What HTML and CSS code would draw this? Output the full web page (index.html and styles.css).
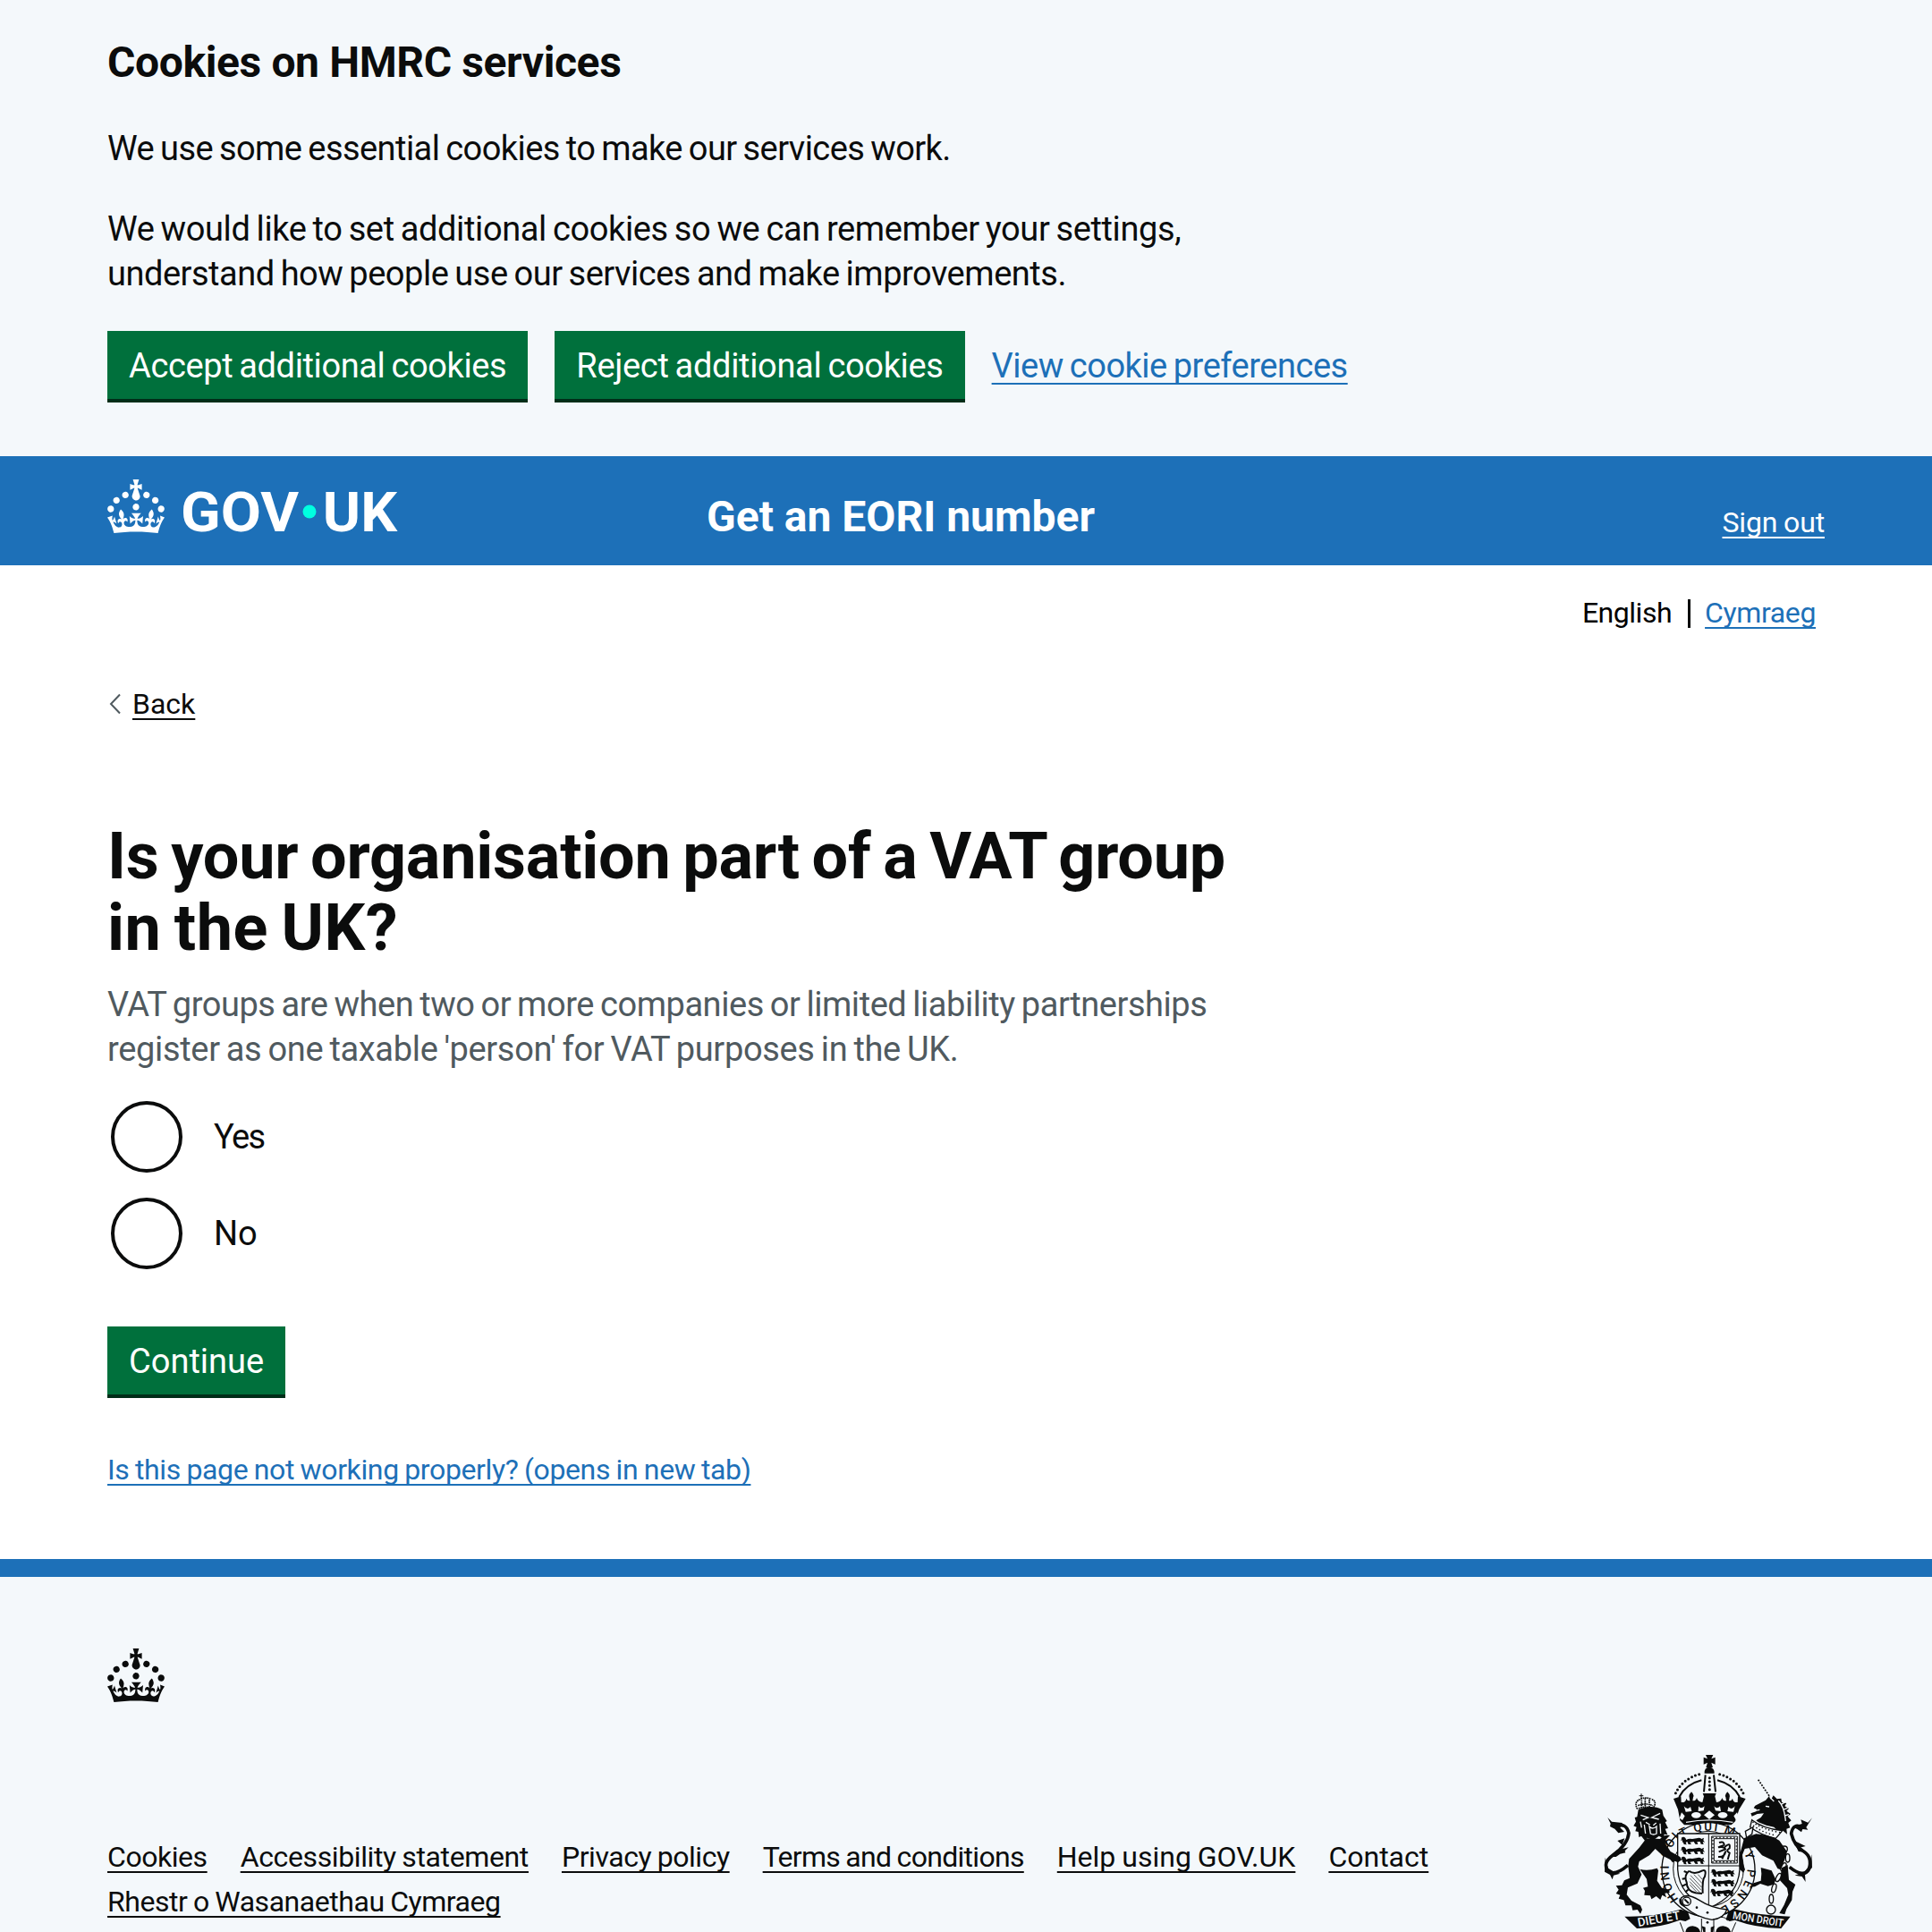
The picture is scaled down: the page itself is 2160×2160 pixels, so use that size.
FILE: index.html
```html
<!DOCTYPE html>
<html lang="en">
<head>
<meta charset="utf-8">
<title>Get an EORI number</title>
<link rel="stylesheet" href="styles.css">
</head>
<body>
<section class="cookie-banner">
  <div class="container">
    <h2 class="heading-m track-4">Cookies on HMRC services</h2>
    <p class="body track-6">We use some essential cookies to make our services work.</p>
    <p class="body"><span class="track-4">We would like to set additional cookies so we can remember your settings,</span><br><span class="track-5">understand how people use our services and make improvements.</span></p>
    <div class="button-group">
      <button class="button track-4">Accept additional cookies</button>
      <button class="button track-3">Reject additional cookies</button>
      <a class="link link-large track-5" href="#">View cookie preferences</a>
    </div>
  </div>
</section>

<header class="header">
  <div class="container header-row">
    <a class="header-logo" href="#" aria-label="GOV.UK">
      <svg class="logo" viewBox="0 0 164 30">
        <path id="crown" d="M22.6 10.4c-1 .4-2-.1-2.4-1-.4-.9.1-2 1-2.4.9-.4 2 .1 2.4 1s-.1 2-1 2.4m-5.9 6.7c-.9.4-2-.1-2.4-1-.4-.9.1-2 1-2.4.9-.4 2 .1 2.4 1s-.1 2-1 2.4m10.8-3.7c-1 .4-2-.1-2.4-1-.4-.9.1-2 1-2.4.9-.4 2 .1 2.4 1s0 2-1 2.4m3.3 4.8c-1 .4-2-.1-2.4-1-.4-.9.1-2 1-2.4.9-.4 2 .1 2.4 1s-.1 2-1 2.4M17 4.7l2.3 1.2V2.5l-2.3.7-.2-.2.9-3h-3.4l.9 3-.2.2c-.1.1-2.3-.7-2.3-.7v3.4L15 4.7c.1.1.1.2.2.2l-1.3 4c-.1.2-.1.4-.1.6 0 1.1.8 2 1.9 2.2h.7c1-.2 1.9-1.1 1.9-2.1 0-.2 0-.4-.1-.6l-1.3-4c-.1-.2 0-.2.1-.3m-7.6 5.7c.9.4 2-.1 2.4-1 .4-.9-.1-2-1-2.4-.9-.4-2 .1-2.4 1s0 2 1 2.4m-5 3c.9.4 2-.1 2.4-1 .4-.9-.1-2-1-2.4-.9-.4-2 .1-2.4 1s.1 2 1 2.4m-3.2 4.8c.9.4 2-.1 2.4-1 .4-.9-.1-2-1-2.4-.9-.4-2 .1-2.4 1s0 2 1 2.4m14.8 11c4.4 0 8.6.3 12.3.8 1.1-4.5 2.4-7 3.7-8.8l-2.5-.9c.2 1.3.3 1.9 0 2.7-.4-.4-.8-1.1-1.1-2.3l-1.2 4c.7-.5 1.3-.8 2-.9-1.1 2.5-2.6 3.1-3.5 3-1.1-.2-1.7-1.2-1.5-2.1.3-1.2 1.5-1.5 2.1-.1 1.1-2.3-.8-3-2-2.3 1.9-1.9 2.1-3.5.6-5.6-2.1 1.6-2.1 3.2-1.2 5.5-1.2-1.4-3.2-.6-2.5 1.6.9-1.4 2.1-.5 1.9.8-.2 1.1-1.7 2.1-3.5 1.9-2.7-.2-2.9-2.1-2.9-3.6.7-.1 1.9.5 2.9 1.9l.4-4.3c-1.1 1.1-2.1 1.4-3.2 1.4.4-1.2 2.1-3 2.1-3h-5.4s1.7 1.9 2.1 3c-1.1 0-2.1-.2-3.2-1.4l.4 4.3c1-1.4 2.2-2 2.9-1.9-.1 1.5-.2 3.4-2.9 3.6-1.9.2-3.4-.8-3.5-1.9-.2-1.3 1-2.2 1.9-.8.7-2.3-1.2-3-2.5-1.6.9-2.2.9-3.9-1.2-5.5-1.5 2-1.3 3.7.6 5.6-1.2-.7-3.1 0-2 2.3.6-1.4 1.8-1.1 2.1.1.2.9-.3 1.9-1.5 2.1-.9.2-2.4-.5-3.5-3 .6 0 1.2.3 2 .9l-1.2-4c-.3 1.1-.7 1.9-1.1 2.3-.3-.8-.2-1.4 0-2.7l-2.9.9C1.3 23 2.6 25.5 3.7 30c3.7-.5 7.9-.8 12.3-.8"/>
        <text class="logo-text" x="41" y="29" textLength="66" lengthAdjust="spacingAndGlyphs">GOV</text>
        <circle class="logo-dot" cx="113" cy="18" r="3.75"/>
        <text class="logo-text" x="120.4" y="29" textLength="41.6" lengthAdjust="spacingAndGlyphs">UK</text>
      </svg>
    </a>
    <a class="service-name heading-m" href="#">Get an EORI number</a>
    <a class="link link-inverse sign-out track-1" href="#">Sign out</a>
  </div>
</header>

<div class="container page">
  <nav class="languages">
    <span class="language-current track-5">English</span>
    <a class="link track-4" href="#">Cymraeg</a>
  </nav>
  <a class="back" href="#">
    <svg class="back-icon" viewBox="0 0 13 24"><path d="M12 1.5 2 12l10 10.500"/></svg>
    <span class="link link-text">Back</span>
  </a>
  <main>
    <h1 class="heading-xl">Is your organisation part of a VAT group<br><span class="track-wide">in the UK?</span></h1>
    <p class="body hint"><span class="track-45">VAT groups are when two or more companies or limited liability partnerships</span><br><span class="track-3">register as one taxable 'person' for VAT purposes in the UK.</span></p>
    <div class="radios">
      <label class="radio"><input type="radio" name="vat"><span class="track-yes">Yes</span></label>
      <label class="radio"><input type="radio" name="vat"><span>No</span></label>
    </div>
    <button class="button">Continue</button>
    <p class="report"><a class="link track-4" href="#">Is this page not working properly? (opens in new tab)</a></p>
  </main>
</div>

<footer class="footer">
  <div class="container">
    <svg class="footer-crown" viewBox="0 0 32 30"><use href="#crown"/></svg>
    <div class="footer-meta">
      <ul class="footer-links">
        <li><a class="link link-text track-45" href="#">Cookies</a></li>
        <li><a class="link link-text track-4" href="#">Accessibility statement</a></li>
        <li><a class="link link-text track-45" href="#">Privacy policy</a></li>
        <li><a class="link link-text track-7" href="#">Terms and conditions</a></li>
        <li><a class="link link-text" href="#">Help using GOV.UK</a></li>
        <li><a class="link link-text" href="#">Contact</a></li>
        <li><a class="link link-text track-45" href="#">Rhestr o Wasanaethau Cymraeg</a></li>
      </ul>
      <svg class="arms" viewBox="60 66 750 594">
        <defs>
          <g id="passant">
            <path d="M0 3q7-7 14 0l3 6q8-6 20-3l14-2q10-5 17 2l8-4-2 8 5 7-7-2 3 9-9-1-3-8-10 1 3 8-9-1-5-8-13 2 5 7-10 0-4-9-5 3 3 7-9-1-2-6-4-2 2-5-8-1 5-3z"/>
          </g>
          <path id="motto-left" d="M320 550Q281 500 288 420Q291 370 330 335"/>
          <path id="motto-top" d="M330 343Q420 297 510 343"/>
          <path id="motto-right" d="M540 395Q567 460 524 525Q490 572 430 590"/>
        </defs>
        <!-- crown -->
        <path d="M411 66h25l-6 13 13-5v24l-13-6 5 16h-23l5-16-13 6V74l13 5z"/>
        <path d="M407 128q-2-20 16-21 18 1 17 21z"/>
        <path class="pearls" d="M389 131Q326 150 306 204M458 131Q521 150 541 204M424 143v46"/>
        <path class="line-thick" d="M397 151Q345 164 322 207M450 151Q502 164 525 207"/>
        <path class="line-thick" d="M410 133l-5 57M438 133l6 57"/>
        <path d="M303 213l25-8 1 20q15 2 17-13 3 9 12 8l-2-12q-3-8 7-18 11 10 6 18l-2 12q11 1 14-10 4 14 19 15l5-20-4-10h45l-4 10 5 20q15-1 19-15 3 11 14 10l-2-12q-5-8 6-18 10 10 7 18l-2 12q9 1 12-8 2 15 17 13l1-20 26 8-22 36-13 40-13 12H339l-14-15-7-37z"/>
        <path class="cut" d="M338 238q11 15 22 2l4 15-20 2zM387 238q8 12 20 0l-3 15-18 2zM439 238q10 12 20 0l3 17-18-2zM487 240q12 13 22-2l-5 19-20-2z"/>
        <path class="cut" d="M423 253l18 15-18 14-18-14zM330 259l11 12-8 14-10-7zM516 259l-11 12 8 14 11-7z"/>
        <ellipse class="cut" cx="379" cy="268" rx="16" ry="10"/><ellipse class="cut" cx="468" cy="268" rx="16" ry="10"/>
        <path class="cut-line" d="M345 292q78-15 157 0"/>
        <!-- garter -->
        <ellipse class="garter" cx="420" cy="451" rx="156" ry="158"/>
        <ellipse class="line" cx="420" cy="448" rx="118" ry="126"/>
        <text class="motto"><textPath href="#motto-left" textLength="225">HONI SOI</textPath></text>
        <text class="motto"><textPath href="#motto-top" textLength="180">T QUI M</textPath></text>
        <text class="motto"><textPath href="#motto-right" textLength="220">Y PENSE</textPath></text>
        <!-- shield -->
        <path class="shield" d="M317 330h208v120q-5 90-104 130-99-40-104-130z"/>
        <path class="line" d="M421 330v250M317 438h208"/>
        <use href="#passant" x="329" y="342"/><use href="#passant" x="329" y="375"/><use href="#passant" x="329" y="408"/>
        <use href="#passant" x="430" y="450"/><use href="#passant" x="430" y="483"/><use href="#passant" x="428" y="516"/>
        <path class="line" d="M431 339h86v90h-86zM439 347h70v74h-70z"/>
        <path class="pearls small" d="M435 343h79v82h-79z"/>
        <path class="line-thick" d="M456 360q16-6 17 8l-20 8q20-4 24 6l-22 9M453 408q22 2 25-20M475 375q20-18 16 4-15 8 0 16l-6 22M476 393l-10 22"/>
        <path class="line-thick" d="M355 455q-18 15-8 38 0 30 30 36l22 2M355 455q18 14 45-1 15-5 8 20-9 8-7 56"/>
        <path class="line-thin" d="M360 470l37 40M358 480l38 40M357 491l34 36M371 467l28 30M385 467l14 16M358 502l22 23"/>
        <path class="line-thick" d="M348 460l-10-4M344 480l-12 2M345 500l-12 6M352 518l-9 8"/>
        <!-- buckle and strap -->
        <path class="strap" d="M329 545q20-16 60 8 40 26 93 32-10 30-50 34-52-8-90-42-18-14-13-32z"/>
        <circle class="strap" cx="347" cy="557" r="14"/><path class="line-thick" d="M340 550l14 14M326 548q-6 18 14 26"/>
        <circle cx="381" cy="578" r="4"/><circle cx="417" cy="595" r="4"/><circle cx="417" cy="628" r="4"/>
        <path class="line" d="M397 615v45M438 615v45M325 628l12 32M512 628l-14 32M460 610q20 0 24 12"/>
        <path d="M343 660q3-20 24-20 22 2 26 20zM445 660q3-20 24-20 22 2 26 20zM398 640l12 4v16h-7zM440 640l-12 4v16h7z"/>
        <!-- lion -->
        <path d="M185 250q45-20 80 0l4 20 12 18-6 4 10 20-10 2 8 20-12-2 3 16-20-10-18 14-22-8-5 12-14-18-8 4-2-18-10-2 4-14-10-4 8-14-4-14 8-2z"/>
        <path class="cut-line" d="M193 268l25 8-18 8M258 262l-28 14 24 6M210 292l14 8M245 294l-10 8M222 306q10 12 24 0v24q-10 6-20 0zM205 300l4 30M258 296l2 34M192 290l4 20"/>
        <path class="crown-small" d="M182 248q-14-26 12-34M232 248q20-26-4-34M194 214q12-8 34 0M184 236q25-10 50 0M186 246q23-10 48 0M208 212v30M196 218v24M222 216v26"/>
        <path class="line" d="M195 196v16M188 203h14"/>
        <path d="M212 346l50 2 13 14 18 28 32 18 5 10-12 9-10-5-8 5-8-10-24-12-26-24-20 22-34 20-4 18 12 26-14 30-32 14-4 24 16 20 30 16 6 14-6 14-10-14-16 2-4-16-20 0-6-18-17-5 5-12-14-5 9-13-9-13 20-2 8-16 18-8-5-40 3-24 34-38z"/>
        <path d="M190 449q26 8 58-3l4 8-4 34 16 24 24 6 2 10-16 2 5 14-14-8-6 16-14-12-16 10-4-12-20-2 2-14-6-10 16-4-4-26z"/>
        <path class="tail" d="M150 436Q108 472 85 457Q62 430 100 402Q150 366 153 328Q144 292 112 306"/>
        <path d="M82 276l14 14 36 4-8 16 14 14-20 4-12-14-16-8 2-10zM92 408l20-22 40-10-12 12 2 6-18 4-14 10zM74 410l-2 48 18 10 8 16 4-14 22-6-20-6-20-12zM115 354l24-8-8 22z"/>
        <path d="M255 352q14-20 36-16l-14 14 10 20z"/>
        <!-- unicorn -->
        <path class="horn" d="M587 149l38 56"/>
        <path d="M562 262l18-6 2-8-10-4 5-8 35-18 12-14 6 12 8-14 12 12 14-2 2 12 16 4-6 10 14 8-8 8 14 10-10 8 12 14-10 8 6 16-12 4 2 18-14-12-14 4-16-16-26-6-26-10-8-6 16-10 10-14-22 2-18 8z"/>
        <path class="cut-line" d="M612 238l12 2M655 220q20 20 24 68M664 232l14-8M670 250l16-6M676 270l14-4M626 208l14 14M572 254l20-4"/>
        <path class="collar" d="M566 284q34 28 102 36l-22 26q-52-12-86-38z"/>
        <path class="pearls small" d="M570 292q34 26 92 34M572 304q32 24 74 32"/>
        <path d="M540 345l40-14q50 4 78 22l26 38-8 26-14 34-10-4-14-26-38-18-24-28-34 6-8 20 3 30 6 20-6 10-12-12-2-40z"/>
        <path d="M596 444l36 10 14 30-6 16-20 6-26-8-18 10-18 2 14-14 24-8 2-24zM666 445l20-10 4 50 22 16-10 24-2 28-18 30-6 18-18-4 16-28 14-34-4-22-24-26z"/>
        <path class="tail" d="M692 442Q740 480 757 450Q770 410 740 390Q708 372 698 330Q704 292 736 310"/>
        <path d="M768 277l-14 16-24-10 4 14-32 10 16 8 14 10 4-10 18 2-6-8zM704 352l42 20-22 6 18 14-20-2zM766 400l2 44-24 24 2 24-12-18-24-4 32-12 16-20z"/>
        <path class="collar" d="M544 322l26-14-4 24-18 12z"/>
        <g class="chain"><ellipse cx="675" cy="382" rx="10" ry="10"/><ellipse cx="686" cy="412" rx="7" ry="14"/><ellipse cx="672" cy="442" rx="7" ry="15" transform="rotate(25 672 442)"/><ellipse cx="655" cy="477" rx="7" ry="15" transform="rotate(28 655 477)"/><ellipse cx="640" cy="513" rx="7" ry="15" transform="rotate(15 640 513)"/><ellipse cx="631" cy="549" rx="7" ry="15"/><circle cx="630" cy="585" r="15"/></g>
        <!-- motto scroll -->
        <path d="M139 608q100 2 188-24l24 8 8 24-16 8-18-4q-70 26-145 28z"/>
        <path d="M695 608q-100-2-190-25l-18 10-8 24 12 7 18-4q70 26 155 28z"/>
        <text class="scroll" transform="translate(185 642) rotate(-10)" textLength="144" lengthAdjust="spacingAndGlyphs">DIEU ET</text>
        <text class="scroll scroll-right" transform="translate(500 616) rotate(9)" textLength="172" lengthAdjust="spacingAndGlyphs">MON DROIT</text>
      </svg>
    </div>
  </div>
</footer>
</body>
</html>
```
FILE: styles.css
```css
* { box-sizing: border-box; }
html { height: 100%; overflow: hidden; }
body {
  height: 2160px;
  margin: 0;
  overflow: hidden;
  background: #fff;
  color: #0b0c0c;
  font-family: Roboto, "Liberation Sans", sans-serif;
  font-size: 32px;
  line-height: 40px;
  word-spacing: -1px;
}
h1, h2, p, ul { margin: 0; padding: 0; font-weight: 400; }
.container { width: 1920px; margin: 0 auto; }

.heading-m { font-size: 48px; line-height: 60px; font-weight: 700; word-spacing: 0; }
.heading-xl { padding-top: 1px; font-size: 72px; line-height: 80px; font-weight: 700; word-spacing: -4px; letter-spacing: -.23px; margin-bottom: 20px; }
.body { font-size: 38px; line-height: 50px; word-spacing: -2px; }

/* letter spacing, in tenths of a pixel */
.track-1 { letter-spacing: -.15px; }
.track-3 { letter-spacing: -.33px; }
.track-4 { letter-spacing: -.38px; }
.track-45 { letter-spacing: -.45px; }
.track-5 { letter-spacing: -.48px; }
.track-6 { letter-spacing: -.56px; }
.track-7 { letter-spacing: -.7px; }
.track-wide { letter-spacing: .52px; }
.track-yes { letter-spacing: -1.6px; }

.link { color: #1d70b8; text-decoration: underline; text-decoration-thickness: 2px; text-underline-offset: 5px; text-decoration-skip-ink: none; }
.link-large { padding-top: 2px; font-size: 38px; line-height: 38px; word-spacing: -2px; text-underline-offset: 6px; }
.link-text { color: #0b0c0c; }
.link-inverse { color: #fff; }

.button {
  height: 76px;
  padding: 20px 24px 18px;
  border: 0;
  background: #00703c;
  box-shadow: 0 4px 0 #002d18;
  color: #fff;
  font: 400 38px/38px Roboto, "Liberation Sans", sans-serif;
  word-spacing: -2px;
  white-space: nowrap;
}

.cookie-banner { height: 510px; padding-top: 40px; background: #f4f8fb; }
.cookie-banner .heading-m { margin-bottom: 41px; }
.cookie-banner .body { margin-bottom: 40px; }
.cookie-banner .body + .body { margin-bottom: 39px; }
.button-group { display: flex; align-items: center; gap: 30px; }

.header { height: 122px; background: #1d70b8; color: #fff; }
.header-row { display: flex; padding-top: 26px; }
.header-logo { width: 670px; }
.logo { display: block; width: 328px; height: 60px; overflow: visible; fill: #fff; }
.logo-text { font-size: 31px; font-weight: 700; word-spacing: 0; }
.logo-dot { fill: #00ffe0; }
.service-name { margin-top: 12px; color: #fff; text-decoration: none; }
.sign-out { margin: 28px 0 0 auto; }

.page { display: flex; flex-direction: column; align-items: flex-start; height: 1111px; padding-top: 33px; }
.languages { display: flex; align-self: flex-end; margin-right: 10px; }
.language-current { display: flex; color: #000; }
.language-current::after { content: ""; width: 3px; height: 32px; margin: 5px 16px 0 18px; background: #0b0c0c; }
.back { display: flex; align-items: center; gap: 13px; margin: 62px 0 110px 2px; text-decoration: none; }
.back-icon { width: 13px; height: 24px; fill: none; stroke: #505a5f; stroke-width: 2; }

.hint { margin-bottom: 29px; color: #505a5f; }
.radios { display: grid; gap: 20px; margin-bottom: 60px; }
.radio { display: flex; align-items: center; height: 88px; padding-left: 4px; gap: 35px; font-size: 38px; }
.radio input { appearance: none; width: 80px; height: 80px; margin: 0; border: 4px solid #0b0c0c; border-radius: 50%; }
.report { margin-top: 64px; }

.footer { height: 417px; padding-top: 80px; overflow: hidden; border-top: 20px solid #1d70b8; background: #f4f8fb; }
.footer-crown { display: block; width: 64px; height: 60px; fill: #0b0c0c; }
.footer-meta { display: flex; justify-content: space-between; margin-top: 59px; }
.footer-links { display: flex; flex-wrap: wrap; align-content: flex-start; gap: 10px 37px; width: 1560px; margin-top: 94px; list-style: none; }

.arms { flex: none; width: 250px; height: 198px; fill: #0b0c0c; }
.arms .line, .arms .line-thin, .arms .line-thick, .arms .pearls, .arms .tail, .arms .horn, .arms .chain, .arms .crown-small { fill: none; stroke: #0b0c0c; stroke-width: 3; }
.arms .line-thin { stroke-width: 2; }
.arms .line-thick { stroke-width: 6; }
.arms .pearls { stroke-width: 9; stroke-linecap: round; stroke-dasharray: 0 13; }
.arms .pearls.small { stroke-width: 5; stroke-dasharray: 0 12; }
.arms .tail { stroke-width: 11; }
.arms .horn { stroke-width: 5; stroke-dasharray: 6 4; }
.arms .chain { stroke-width: 4; }
.arms .crown-small { stroke-width: 5; stroke-dasharray: 5 2; }
.arms .cut { fill: #f4f8fb; }
.arms .cut-line { fill: none; stroke: #f4f8fb; stroke-width: 4; }
.arms .garter, .arms .shield, .arms .strap, .arms .collar { fill: #f4f8fb; stroke: #0b0c0c; stroke-width: 4; }
.arms .motto { font-size: 40px; font-weight: 500; word-spacing: 0; }
.arms .scroll { fill: #f4f8fb; font-size: 40px; font-weight: 500; word-spacing: 0; }
.arms .scroll-right { font-size: 36px; }
```
